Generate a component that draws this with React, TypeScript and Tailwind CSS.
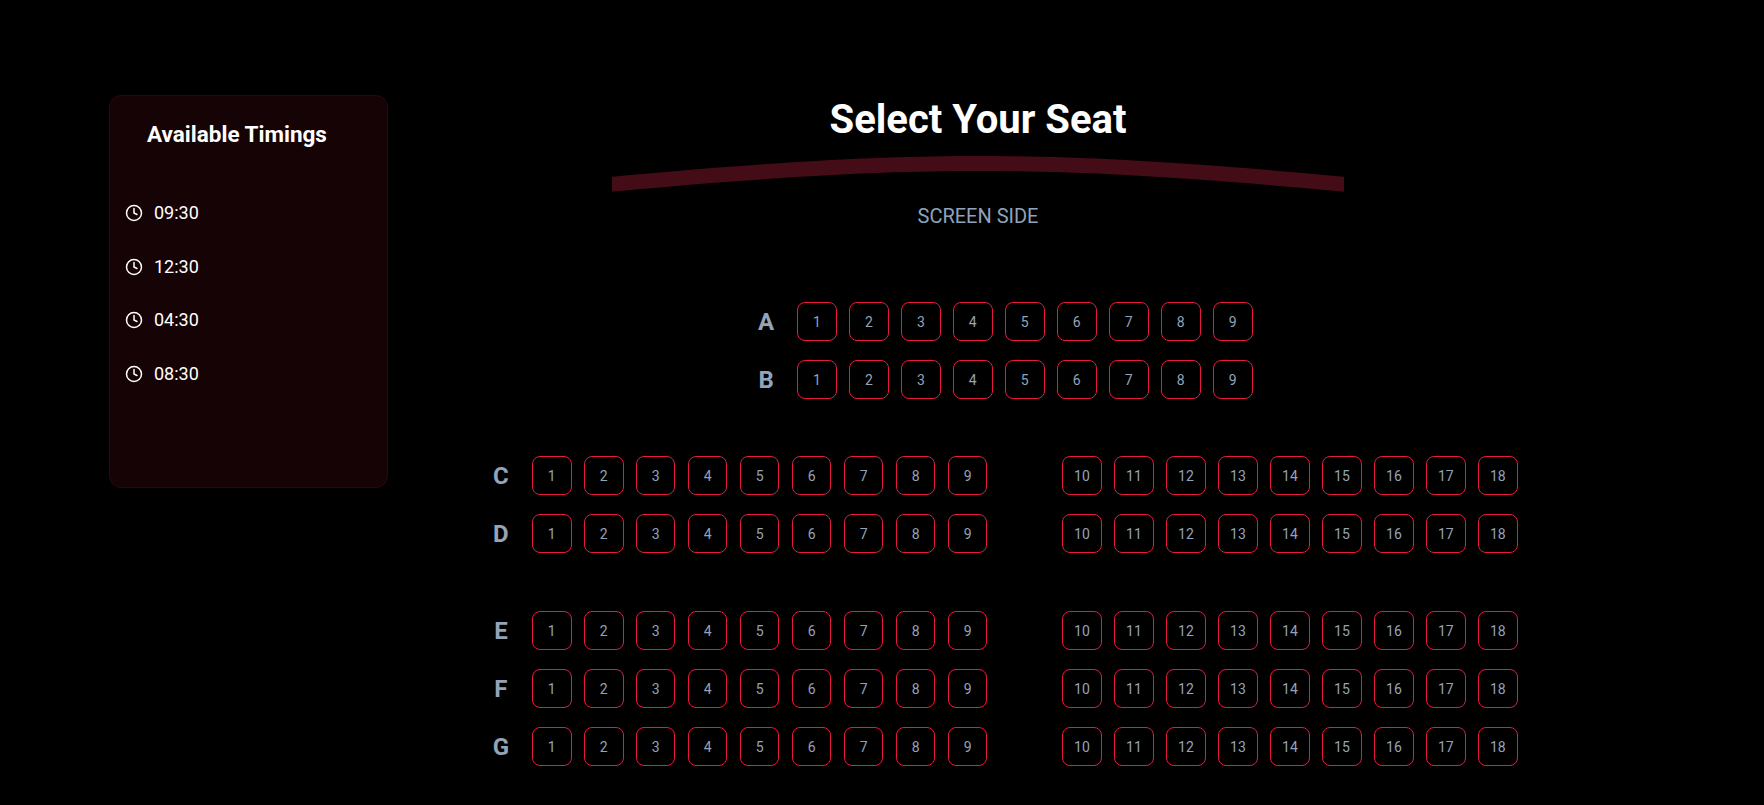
import { Clock } from 'lucide-react'

const timings = ['09:30', '12:30', '04:30', '08:30']

const leftSeats = [1, 2, 3, 4, 5, 6, 7, 8, 9]
const rightSeats = [10, 11, 12, 13, 14, 15, 16, 17, 18]

function Seat({ n }: { n: number }) {
  return (
    <button className="w-[39.6px] h-[39px] rounded-lg border border-[#e8193f] bg-black flex items-center justify-center text-sm text-[#94a3b8]">
      {n}
    </button>
  )
}

function SeatRow({ label, split, className }: { label: string; split?: boolean; className?: string }) {
  return (
    <div className={`flex items-center ${className ?? ''}`}>
      <div className="w-[26px] mr-[18px] text-center text-2xl font-bold text-[#94a3b8]">{label}</div>
      <div className="flex gap-[12.4px]">
        {leftSeats.map((n) => (
          <Seat key={n} n={n} />
        ))}
      </div>
      {split && (
        <div className="flex gap-[12.4px] ml-[74.8px]">
          {rightSeats.map((n) => (
            <Seat key={n} n={n} />
          ))}
        </div>
      )}
    </div>
  )
}

export default function App() {
  return (
    <div className="min-h-screen bg-black flex font-['Roboto',sans-serif] text-white">
      <aside className="ml-[109px] mt-[95px] w-[279px] h-[393px] rounded-xl border border-[#280910] bg-[#160305] shrink-0">
        <h2 className="mt-[23px] ml-[37px] text-[22.5px] leading-[30px] font-bold">Available Timings</h2>
        <ul className="mt-[52px] ml-[15px] flex flex-col gap-[29.6px]">
          {timings.map((t) => (
            <li key={t} className="flex items-center gap-[11px] text-lg leading-6">
              <Clock size={18} />
              <span>{t}</span>
            </li>
          ))}
        </ul>
      </aside>

      <main className="flex-1 pr-[196px] flex flex-col items-center">
        <h1 className="mt-[96px] text-[40px] leading-[48px] font-bold">Select Your Seat</h1>
        <svg className="mt-3" width="732" height="36" viewBox="0 0 732 36">
          <path d="M0 20.7 C180 4 280 0 366 0 C452 0 552 4 732 20.7 L732 35.7 C552 19 452 15 366 15 C280 15 180 19 0 35.7 Z" fill="#430c16" />
        </svg>
        <div className="mt-[10px] text-xl leading-7 text-[#8fa3bb]">SCREEN SIDE</div>

        <div className="ml-[49.6px] mt-[72px] flex flex-col items-center">
          <SeatRow label="A" />
          <SeatRow label="B" className="mt-[19px]" />
          <SeatRow label="C" split className="mt-[57px]" />
          <SeatRow label="D" split className="mt-[19px]" />
          <SeatRow label="E" split className="mt-[58px]" />
          <SeatRow label="F" split className="mt-[19px]" />
          <SeatRow label="G" split className="mt-[19px]" />
        </div>
      </main>
    </div>
  )
}
